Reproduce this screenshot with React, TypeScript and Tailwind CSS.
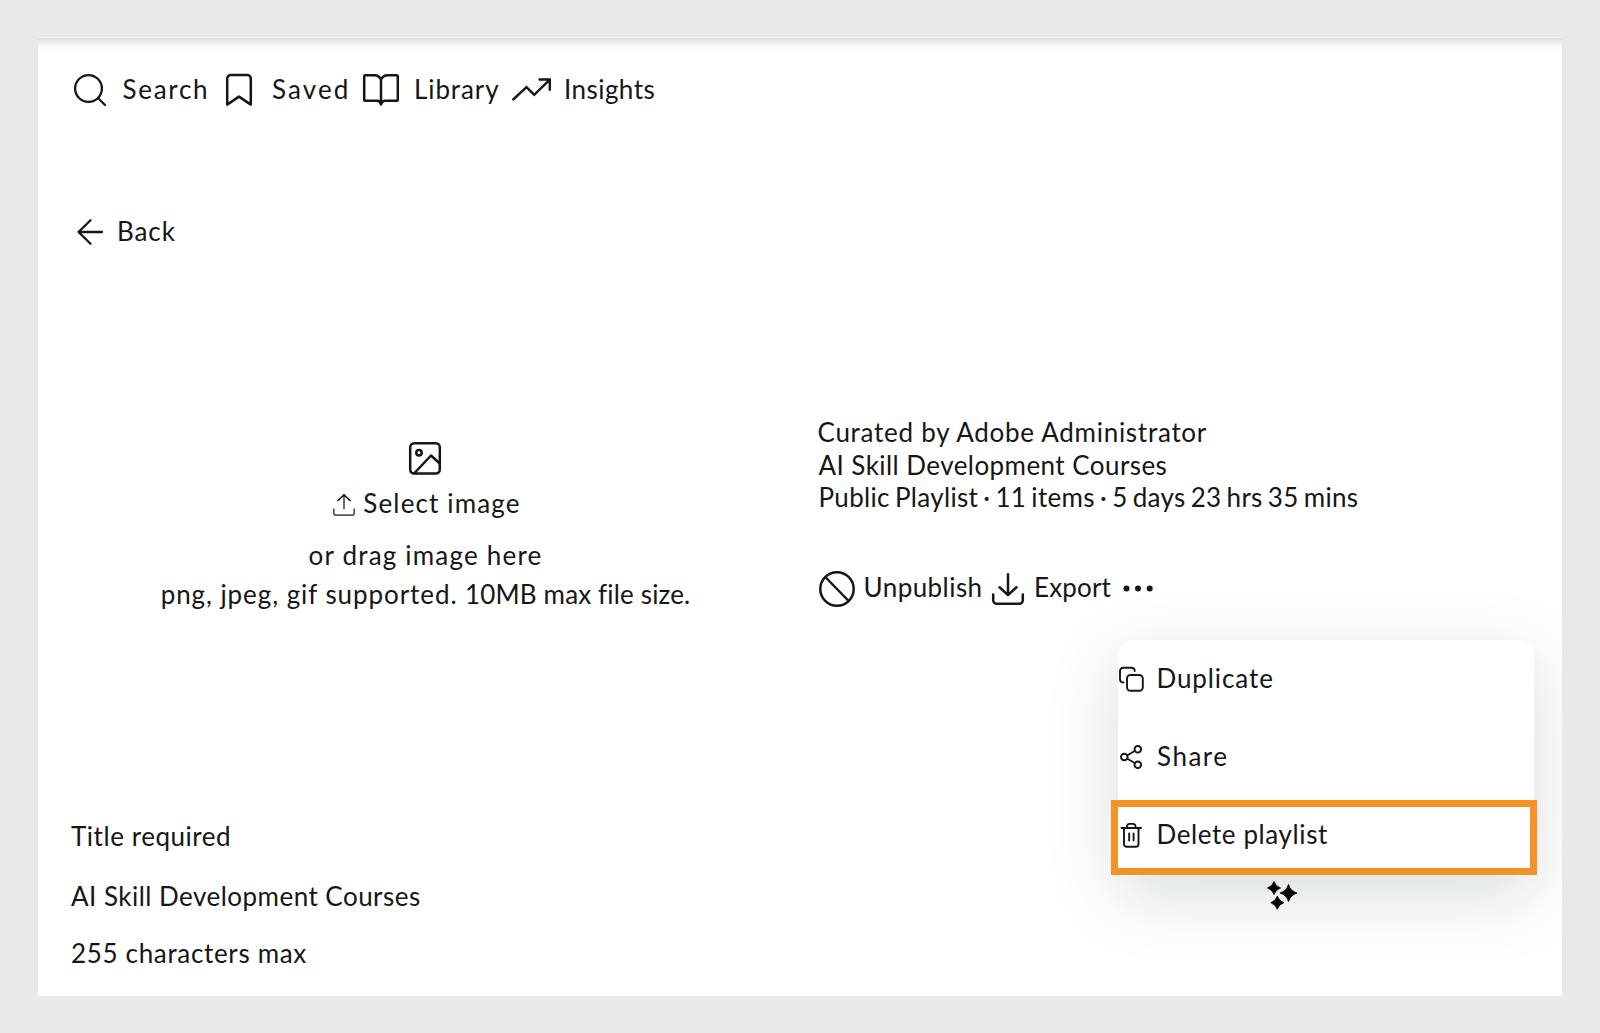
import type { ReactNode } from "react";

type IconProps = { w: number; h: number; sw?: number; className?: string; children: ReactNode };

function Icon({ w, h, sw = 2.3, className = "", children }: IconProps) {
  return (
    <svg
      width={w}
      height={h}
      viewBox={`0 0 ${w} ${h}`}
      fill="none"
      stroke="currentColor"
      strokeWidth={sw}
      strokeLinecap="round"
      strokeLinejoin="round"
      className={`shrink-0 overflow-visible ${className}`}
      aria-hidden="true"
    >
      {children}
    </svg>
  );
}

function TopNav() {
  return (
    <nav className="mt-[35px] grid h-8 grid-cols-[152px_137px_149px_auto] pl-9">
      <a className="flex gap-[16.5px]">
        <Icon w={32} h={32} className="mt-[0.5px]">
          <circle cx="14.5" cy="14.5" r="13.4" />
          <path d="M24 24l7 7" />
        </Icon>
        <span className="tracking-[1.7px]">Search</span>
      </a>
      <a className="flex gap-5">
        <Icon w={26} h={32} sw={2.5} className="mt-[0.5px]">
          <path d="M1.2 30.6V4.6A3.5 3.5 0 0 1 4.7 1.1H21.3A3.5 3.5 0 0 1 24.8 4.6V30.6L13 22.6z" />
        </Icon>
        <span className="tracking-[2.1px]">Saved</span>
      </a>
      <a className="flex gap-[15px]">
        <Icon w={36} h={32} sw={2.5} className="mt-[0.5px]">
          <path d="M18 5.5C16.5 2.5 14.5 1.2 11.5 1.2H2.6a1.4 1.4 0 0 0-1.4 1.4V25.4a1.4 1.4 0 0 0 1.4 1.4H14c2 0 3.5 1.3 4 3.8.5-2.5 2-3.8 4-3.8h11.4a1.4 1.4 0 0 0 1.4-1.4V2.6a1.4 1.4 0 0 0-1.4-1.4H24.5C21.5 1.2 19.5 2.5 18 5.5V30.6" />
        </Icon>
        <span className="tracking-[0.9px]">Library</span>
      </a>
      <a className="flex gap-[13px]">
        <Icon w={39} h={23} sw={2.4} className="mt-[5px]">
          <path d="M1.2 21.5L14.5 9.2L22.2 16.8L37.5 1.8M27.5 1.5H37.8V11.8" strokeLinejoin="miter" />
        </Icon>
        <span className="tracking-[0.45px]">Insights</span>
      </a>
    </nav>
  );
}

function BackLink() {
  return (
    <a className="mt-[110px] flex h-8 gap-3.5 pl-[39px]">
      <Icon w={26} h={26} className="mt-[4px]">
        <path d="M25 13H1.5M13.5 1.2L1.5 13L13.5 24.8" />
      </Icon>
      <span className="tracking-[0.9px]">Back</span>
    </a>
  );
}

function ImageUpload() {
  return (
    <div className="flex flex-col items-center pt-[27px]">
      <Icon w={32} h={32} sw={2.5}>
        <rect x="1.2" y="1.2" width="29.6" height="30.4" rx="4" />
        <circle cx="10" cy="10.8" r="2.7" />
        <path d="M6 30.5L22 13.5L30.800 21.5" />
      </Icon>
      <button className="mt-[13px] flex h-8 gap-2">
        <Icon w={22} h={22} sw={1.7} className="mt-[7px]">
          <path className="text-[#555]" stroke="currentColor" d="M.8 15V19A2.2 2.2 0 0 0 3 21.2H19A2.2 2.2 0 0 0 21.2 19V15M11 14.5V1" />
          <path d="M5 6.5L11 .8L17 6.5" />
        </Icon>
        <span className="-mr-1 tracking-[1.15px]">Select image</span>
      </button>
      <p className="mt-5 pl-px tracking-[1.2px]">or drag image here</p>
      <p className="mt-[7px] pl-px">
        <span className="tracking-[0.93px]">png, jpeg, gif supported. </span>
        <span className="tracking-[0.15px]">10MB max file size.</span>
      </p>
    </div>
  );
}

function PlaylistInfo() {
  return (
    <div className="pl-[5.5px] pt-px">
      <div className="leading-[32.5px]">
        <p className="tracking-[0.73px]">Curated by Adobe Administrator</p>
        <p className="pl-px tracking-[0.44px]">AI Skill Development Courses</p>
        <p className="pl-px tracking-[0.33px] [word-spacing:-1.9px]">
          Public Playlist · 11 items · 5 days 23 hrs 35 mins
        </p>
      </div>
      <div className="mt-[57.5px] flex h-8 pl-px">
        <Icon w={36} h={36} sw={2.5} className="-mt-[0.5px]">
          <circle cx="18" cy="18" r="16.700" />
          <path d="M6.3 6L29.7 30" />
        </Icon>
        <span className="ml-[9px] w-[128px] tracking-[0.45px]">Unpublish</span>
        <Icon w={32} h={32} sw={2.5} className="mt-[1.5px]">
          <path d="M1.2 21.5V27.3A3.5 3.5 0 0 0 4.7 30.8H27.3A3.5 3.5 0 0 0 30.8 27.3V21.5M16 1.2V22M7.5 14.3L16 22L24.5 14.3" />
        </Icon>
        <span className="ml-[10.5px] w-[89px] tracking-[0.15px]">Export</span>
        <Icon w={30} h={7} className="mt-[13.5px]">
          <g fill="currentColor" stroke="none">
            <circle cx="3.5" cy="3.5" r="3" />
            <circle cx="15" cy="3.5" r="3" />
            <circle cx="26.7" cy="3.5" r="3" />
          </g>
        </Icon>
      </div>
    </div>
  );
}

function ActionMenu() {
  return (
    <div className="absolute left-[1080px] top-[602px] h-[234px] w-[416px] rounded-[14px] bg-white shadow-[0_20px_70px_rgba(20,55,65,0.17)]">
      <div className="mt-[22px] flex h-8 pl-px">
        <Icon w={25} h={25} sw={1.9} className="mt-[5px]">
          <rect x="8" y="8" width="15.8" height="15.8" rx="3.5" />
          <path d="M4.5 15.5C2 15.5 1 14.5 1 12V4A3.2 3.2 0 0 1 4.2 .8H12C14.5 .8 15.7 2 15.7 4" />
        </Icon>
        <span className="ml-[12.5px] tracking-[0.9px]">Duplicate</span>
      </div>
      <div className="mt-[46px] flex h-8 pl-[2px]">
        <Icon w={23} h={24} sw={1.9} className="mt-[5px]">
          <circle cx="4.3" cy="12" r="3.3" />
          <circle cx="17.8" cy="4.3" r="3.3" />
          <circle cx="17.8" cy="19.8" r="3.3" />
          <path d="M7.4 10.2L14.7 6M7.4 13.8L14.7 18" />
        </Icon>
        <span className="ml-[14px] tracking-[1.5px]">Share</span>
      </div>
      <div className="-ml-[7px] mt-7 flex h-[75px] w-[426px] border-[7px] border-[#f39325] bg-white pl-[3px] pt-[11px]">
        <Icon w={21} h={25} sw={1.9} className="mt-[4.5px]">
          <path d="M.5 5H20M3 5V21A2.8 2.8 0 0 0 5.8 23.8H14.7A2.8 2.8 0 0 0 17.5 21V5M5.8 5C5.8 2 7 .9 8.5 .9H12C13.5 .9 14.7 2 14.7 5M8.2 10.5V17.5M12.6 10.5V17.5" />
        </Icon>
        <span className="ml-[14.5px] tracking-[0.6px]">Delete playlist</span>
      </div>
      <svg width="31" height="31" viewBox="0 0 31 31" className="absolute left-[149px] top-[240px]" aria-hidden="true">
        <g fill="#000" stroke="#000" strokeWidth="0.8" strokeLinejoin="round">
          <path d="M7 1.4Q8.6 6.4 13.6 8Q8.6 9.6 7 14.6Q5.4 9.6 .4 8Q5.4 6.4 7 1.4Z" />
          <path d="M21.5 4.4Q23.5 11 30 13Q23.5 15 21.5 21.6Q19.5 15 13 13Q19.5 11 21.5 4.4Z" />
          <path d="M10.3 16.1Q11.9 21 16.9 22.7Q11.9 24.3 10.3 29.3Q8.7 24.3 3.7 22.7Q8.7 21 10.3 16.1Z" />
        </g>
      </svg>
    </div>
  );
}

export default function App() {
  return (
    <div className="h-[1033px] w-[1600px] bg-[#e9e9e9] px-[38px] pt-[38px]">
      <main className="relative h-[958px] overflow-hidden bg-white font-['Lato',sans-serif] text-[26px] leading-8 whitespace-nowrap text-[#161616] shadow-[0_-1px_0_#f4f4f4]">
        <div className="absolute inset-x-0 top-0 h-3 bg-linear-to-b from-[#dcdcdc] via-[#f3f3f3] to-white" />
        <div className="flex flex-col">
          <TopNav />
          <BackLink />
          <div className="mt-[168px] grid grid-cols-[774px_1fr]">
            <ImageUpload />
            <PlaylistInfo />
          </div>
          <div className="mt-[210px] flex flex-col pl-[33px]">
            <label className="tracking-[0.55px]">Title required</label>
            <p className="mt-7 tracking-[0.47px]">AI Skill Development Courses</p>
            <p className="mt-[25px] tracking-[0.67px]">255 characters max</p>
          </div>
        </div>
        <ActionMenu />
      </main>
    </div>
  );
}
